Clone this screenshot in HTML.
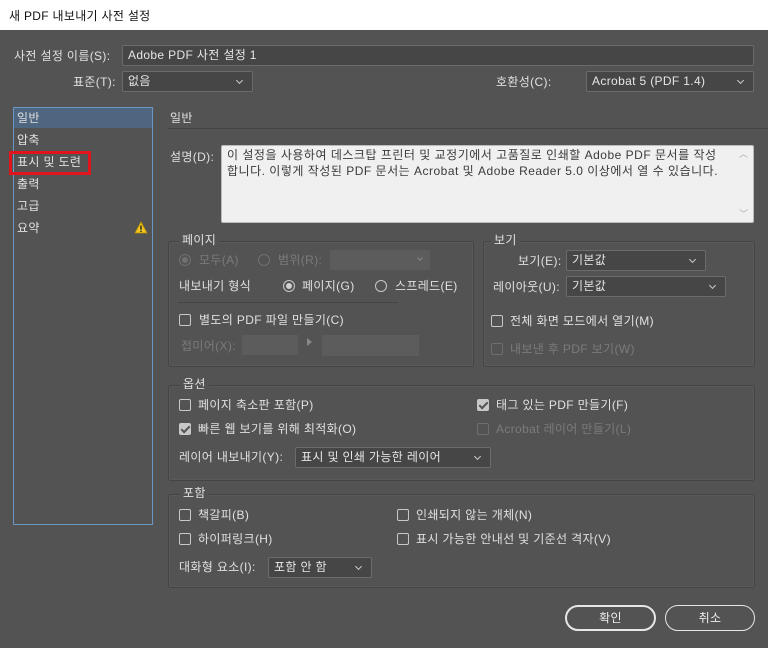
<!DOCTYPE html>
<html><head><meta charset="utf-8"><style>
*{box-sizing:border-box;margin:0;padding:0}
body{width:768px;height:648px;background:#535353;font-family:"Liberation Sans","Noto Sans CJK KR",sans-serif;font-size:12px;color:#e0e0e0;position:relative;overflow:hidden;letter-spacing:0.35px}
.a{position:absolute;white-space:nowrap;line-height:16px}
.title{position:absolute;left:0;top:0;width:768px;height:30px;background:#fff;color:#111;font-size:12px;padding:7px 0 0 9px;letter-spacing:0.3px}
.in{position:absolute;background:#464646;border:1px solid #6b6b6b;border-radius:2px;color:#e6e6e6;padding:2px 5px;line-height:15px;white-space:nowrap}
.sel::after{content:"";position:absolute;right:10px;top:6px;width:4px;height:4px;border-right:1px solid #ccc;border-bottom:1px solid #ccc;transform:rotate(45deg)}
.dis{color:#7b7b7b}
.box{position:absolute;border:1px solid #444;border-radius:3px;box-shadow:inset 0 0 0 1px #5a5a5a}
.leg{position:absolute;background:#535353;padding:0 3px;line-height:14px}
.cb{position:absolute;width:12px;height:12px;border:1px solid #c8c8c8;border-radius:2px}
.cb.d{border-color:#6e6e6e}
.cb.c{background:#c8c8c8}
.cb.c::after{content:"";position:absolute;left:3px;top:0px;width:3px;height:7px;border-right:2px solid #555;border-bottom:2px solid #555;transform:rotate(45deg)}
.rd{position:absolute;width:12px;height:12px;border:1px solid #c8c8c8;border-radius:50%}
.rd.on::after{content:"";position:absolute;left:2px;top:2px;width:6px;height:6px;border-radius:50%;background:#d0d0d0}
.rd.d{border-color:#707070}.rd.d.on::after{background:#707070}
.btn{position:absolute;height:26px;border:2px solid #e6e6e6;border-radius:13px;text-align:center;line-height:22px;color:#eee}
</style></head><body>
<div class="title">새 PDF 내보내기 사전 설정</div>

<div class="a" style="left:14px;top:48px">사전 설정 이름(S):</div>
<div class="in" style="left:122px;top:45px;width:632px;height:21px">Adobe PDF 사전 설정 1</div>
<div class="a" style="left:73px;top:74px">표준(T):</div>
<div class="in sel" style="left:122px;top:71px;width:131px;height:21px">없음</div>
<div class="a" style="left:496px;top:74px">호환성(C):</div>
<div class="in sel" style="left:586px;top:71px;width:168px;height:21px">Acrobat 5 (PDF 1.4)</div>

<div style="position:absolute;left:13px;top:107px;width:140px;height:418px;border:1px solid #6b95c4;background:#535353"></div>
<div style="position:absolute;left:14px;top:108px;width:138px;height:20px;background:#4e6680"></div>
<div class="a" style="left:17px;top:110px">일반</div>
<div class="a" style="left:17px;top:132px">압축</div>
<div class="a" style="left:17px;top:154px">표시 및 도련</div>
<div style="position:absolute;left:9px;top:151px;width:82px;height:24px;border:3px solid #e0141c"></div>
<div class="a" style="left:17px;top:176px">출력</div>
<div class="a" style="left:17px;top:198px">고급</div>
<div class="a" style="left:17px;top:220px">요약</div>
<svg style="position:absolute;left:134px;top:221px" width="14" height="13"><path d="M7 1 L13 12 L1 12 Z" fill="#f2c61f" stroke="#b89208" stroke-width="0.8"/><rect x="6.3" y="4.5" width="1.4" height="4.2" fill="#222"/><rect x="6.3" y="9.6" width="1.4" height="1.4" fill="#222"/></svg>

<div class="a" style="left:170px;top:110px">일반</div>
<div style="position:absolute;left:168px;top:128px;width:600px;height:1px;background:#444"></div>

<div class="a" style="left:170px;top:149px">설명(D):</div>
<div style="position:absolute;left:221px;top:145px;width:533px;height:78px;background:#f0f0f0;border:1px solid #bbb;border-radius:2px;color:#3a3a3a;padding:1px 5px;line-height:16px;white-space:nowrap;letter-spacing:0.5px;overflow:hidden">이 설정을 사용하여 데스크탑 프린터 및 교정기에서 고품질로 인쇄할 Adobe PDF 문서를 작성<br>합니다. 이렇게 작성된 PDF 문서는 Acrobat 및 Adobe Reader 5.0 이상에서 열 수 있습니다.</div>
<div class="a" style="left:739px;top:146px;color:#aaa;font-size:9px">︿</div>
<div class="a" style="left:739px;top:206px;color:#aaa;font-size:9px">﹀</div>

<div class="box" style="left:168px;top:241px;width:306px;height:126px"></div>
<div class="leg" style="left:179px;top:233px">페이지</div>
<div class="rd d on" style="left:179px;top:254px"></div>
<div class="a dis" style="left:199px;top:252px">모두(A)</div>
<div class="rd d" style="left:258px;top:254px"></div>
<div class="a dis" style="left:278px;top:252px">범위(R):</div>
<div style="position:absolute;left:330px;top:250px;width:100px;height:20px;background:#5c5c5c;border-radius:2px"></div>
<div style="position:absolute;left:418px;top:256px;width:4px;height:4px;border-right:1px solid #888;border-bottom:1px solid #888;transform:rotate(45deg)"></div>
<div class="a" style="left:179px;top:278px">내보내기 형식</div>
<div class="rd on" style="left:283px;top:280px"></div>
<div class="a" style="left:302px;top:278px">페이지(G)</div>
<div class="rd" style="left:375px;top:280px"></div>
<div class="a" style="left:395px;top:278px">스프레드(E)</div>
<div style="position:absolute;left:178px;top:302px;width:220px;height:1px;background:#464646"></div>
<div class="cb" style="left:179px;top:314px"></div>
<div class="a" style="left:199px;top:312px">별도의 PDF 파일 만들기(C)</div>
<div class="a dis" style="left:181px;top:338px">접미어(X):</div>
<div style="position:absolute;left:242px;top:335px;width:56px;height:20px;background:#5c5c5c"></div>
<div style="position:absolute;left:307px;top:338px;width:0;height:0;border-left:5px solid #888;border-top:4px solid transparent;border-bottom:4px solid transparent"></div>
<div style="position:absolute;left:322px;top:335px;width:97px;height:21px;background:#5c5c5c"></div>

<div class="box" style="left:483px;top:241px;width:272px;height:126px"></div>
<div class="leg" style="left:491px;top:233px">보기</div>
<div class="a" style="left:518px;top:253px">보기(E):</div>
<div class="in sel" style="left:566px;top:250px;width:140px;height:21px">기본값</div>
<div class="a" style="left:493px;top:279px">레이아웃(U):</div>
<div class="in sel" style="left:566px;top:276px;width:160px;height:21px">기본값</div>
<div class="cb" style="left:491px;top:315px"></div>
<div class="a" style="left:510px;top:313px">전체 화면 모드에서 열기(M)</div>
<div class="cb d" style="left:491px;top:343px"></div>
<div class="a dis" style="left:510px;top:341px">내보낸 후 PDF 보기(W)</div>

<div class="box" style="left:168px;top:385px;width:587px;height:96px"></div>
<div class="leg" style="left:180px;top:377px">옵션</div>
<div class="cb" style="left:179px;top:399px"></div>
<div class="a" style="left:198px;top:397px">페이지 축소판 포함(P)</div>
<div class="cb c" style="left:477px;top:399px"></div>
<div class="a" style="left:496px;top:397px">태그 있는 PDF 만들기(F)</div>
<div class="cb c" style="left:179px;top:423px"></div>
<div class="a" style="left:198px;top:421px">빠른 웹 보기를 위해 최적화(O)</div>
<div class="cb d" style="left:477px;top:423px"></div>
<div class="a dis" style="left:496px;top:421px">Acrobat 레이어 만들기(L)</div>
<div class="a" style="left:179px;top:449px">레이어 내보내기(Y):</div>
<div class="in sel" style="left:295px;top:447px;width:196px;height:21px">표시 및 인쇄 가능한 레이어</div>

<div class="box" style="left:168px;top:494px;width:587px;height:94px"></div>
<div class="leg" style="left:180px;top:486px">포함</div>
<div class="cb" style="left:179px;top:509px"></div>
<div class="a" style="left:198px;top:507px">책갈피(B)</div>
<div class="cb" style="left:397px;top:509px"></div>
<div class="a" style="left:416px;top:507px">인쇄되지 않는 개체(N)</div>
<div class="cb" style="left:179px;top:533px"></div>
<div class="a" style="left:198px;top:531px">하이퍼링크(H)</div>
<div class="cb" style="left:397px;top:533px"></div>
<div class="a" style="left:416px;top:531px">표시 가능한 안내선 및 기준선 격자(V)</div>
<div class="a" style="left:179px;top:559px">대화형 요소(I):</div>
<div class="in sel" style="left:268px;top:557px;width:104px;height:21px">포함 안 함</div>

<div class="btn" style="left:565px;top:605px;width:91px">확인</div>
<div class="btn" style="left:665px;top:605px;width:90px;border-width:1px;line-height:24px">취소</div>
</body></html>
